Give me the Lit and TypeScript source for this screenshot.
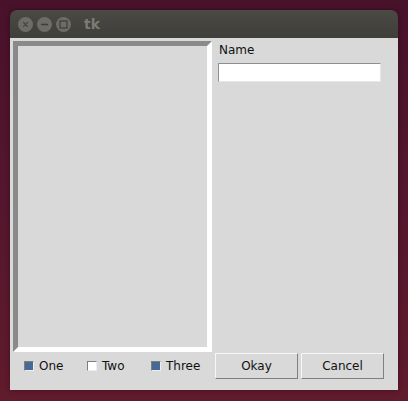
import { LitElement, html, css } from "lit";
import { customElement } from "lit/decorators.js";

@customElement("app-root")
export class AppRoot extends LitElement {
  static styles = css`
    :host {
      display: block;
      width: 408px;
      height: 401px;
      box-sizing: border-box;
      padding: 10px 10px 11px 10px;
      overflow: hidden;
      background: linear-gradient(180deg, #47122a 0%, #53162e 45%, #601b2c 100%);
      font-family: "DejaVu Sans", sans-serif;
      font-size: 12px;
      color: #111;
    }
    .window {
      height: 100%;
      display: flex;
      flex-direction: column;
      border-radius: 7px 7px 0 0;
      overflow: hidden;
      box-shadow: 0 0 5px rgba(0, 0, 0, 0.35);
    }
    .titlebar {
      height: 28px;
      flex: none;
      display: flex;
      align-items: center;
      padding: 0 0 0 8px;
      gap: 4px;
      box-sizing: border-box;
      background: linear-gradient(180deg, #4a4944 0%, #3f3e3a 100%);
    }
    .wb {
      width: 15px;
      height: 15px;
      display: block;
      flex: none;
    }
    .title {
      margin-left: 9px;
      font-weight: 700;
      font-size: 14px;
      color: #7c7b75;
    }
    .client {
      flex: 1;
      background: #d9d9d9;
      display: grid;
      grid-template-columns: 199px 169px;
      grid-template-rows: 311px 26px;
      column-gap: 3px;
      row-gap: 1px;
      padding: 3px 14px 11px 3px;
      box-sizing: border-box;
    }
    .frame {
      box-sizing: border-box;
      border: 5px solid;
      border-color: #8a8a8a #ffffff #ffffff #8a8a8a;
    }
    .side {
      display: flex;
      flex-direction: column;
      padding-left: 4px;
    }
    .label {
      height: 18px;
      line-height: 18px;
    }
    .entry {
      box-sizing: border-box;
      width: 163px;
      height: 19px;
      margin: 4px 0 0 -1px;
      background: #fff;
      border: 1px solid;
      border-color: #8f8f8f #e6e6e6 #e6e6e6 #8f8f8f;
    }
    .checks {
      display: grid;
      grid-template-columns: 63px 64px auto;
      align-items: center;
      padding-left: 11px;
    }
    .check {
      display: flex;
      align-items: center;
      gap: 5px;
    }
    .box {
      box-sizing: border-box;
      width: 10px;
      height: 10px;
      flex: none;
      background: #fff;
      border: 1px solid;
      border-color: #7e7e7e #eeeeee #eeeeee #7e7e7e;
    }
    .box.on {
      background: #456a94;
    }
    .buttons {
      display: grid;
      grid-template-columns: 83px 83px;
      column-gap: 3px;
    }
    .btn {
      box-sizing: border-box;
      display: flex;
      align-items: center;
      justify-content: center;
      background: #d9d9d9;
      border: 1px solid;
      border-color: #f7f7f7 #7f7f7f #7f7f7f #f7f7f7;
    }
  `;

  private check(label: string, on: boolean) {
    return html`<div class="check">
      <span class="box ${on ? "on" : ""}"></span><span>${label}</span>
    </div>`;
  }

  render() {
    return html`<div class="window">
      <div class="titlebar">
        <svg class="wb" viewBox="0 0 15 15">
          <circle cx="7.5" cy="7.5" r="7.5" fill="#6d6c66" />
          <path d="M5.2 5.2l4.6 4.6M9.8 5.2l-4.6 4.6" stroke="#454440" stroke-width="1.2" />
        </svg>
        <svg class="wb" viewBox="0 0 15 15">
          <circle cx="7.5" cy="7.5" r="7.5" fill="#6d6c66" />
          <path d="M4 7.5h7" stroke="#3f3e3a" stroke-width="1.3" />
        </svg>
        <svg class="wb" viewBox="0 0 15 15">
          <circle cx="7.5" cy="7.5" r="7.5" fill="#6d6c66" />
          <rect x="4" y="4" width="7" height="7" fill="none" stroke="#3f3e3a" stroke-width="1.2" />
        </svg>
        <span class="title">tk</span>
      </div>
      <div class="client">
        <div class="frame"></div>
        <div class="side">
          <div class="label">Name</div>
          <div class="entry"></div>
        </div>
        <div class="checks">
          ${this.check("One", true)}${this.check("Two", false)}${this.check("Three", true)}
        </div>
        <div class="buttons">
          <div class="btn">Okay</div>
          <div class="btn">Cancel</div>
        </div>
      </div>
    </div>`;
  }
}
